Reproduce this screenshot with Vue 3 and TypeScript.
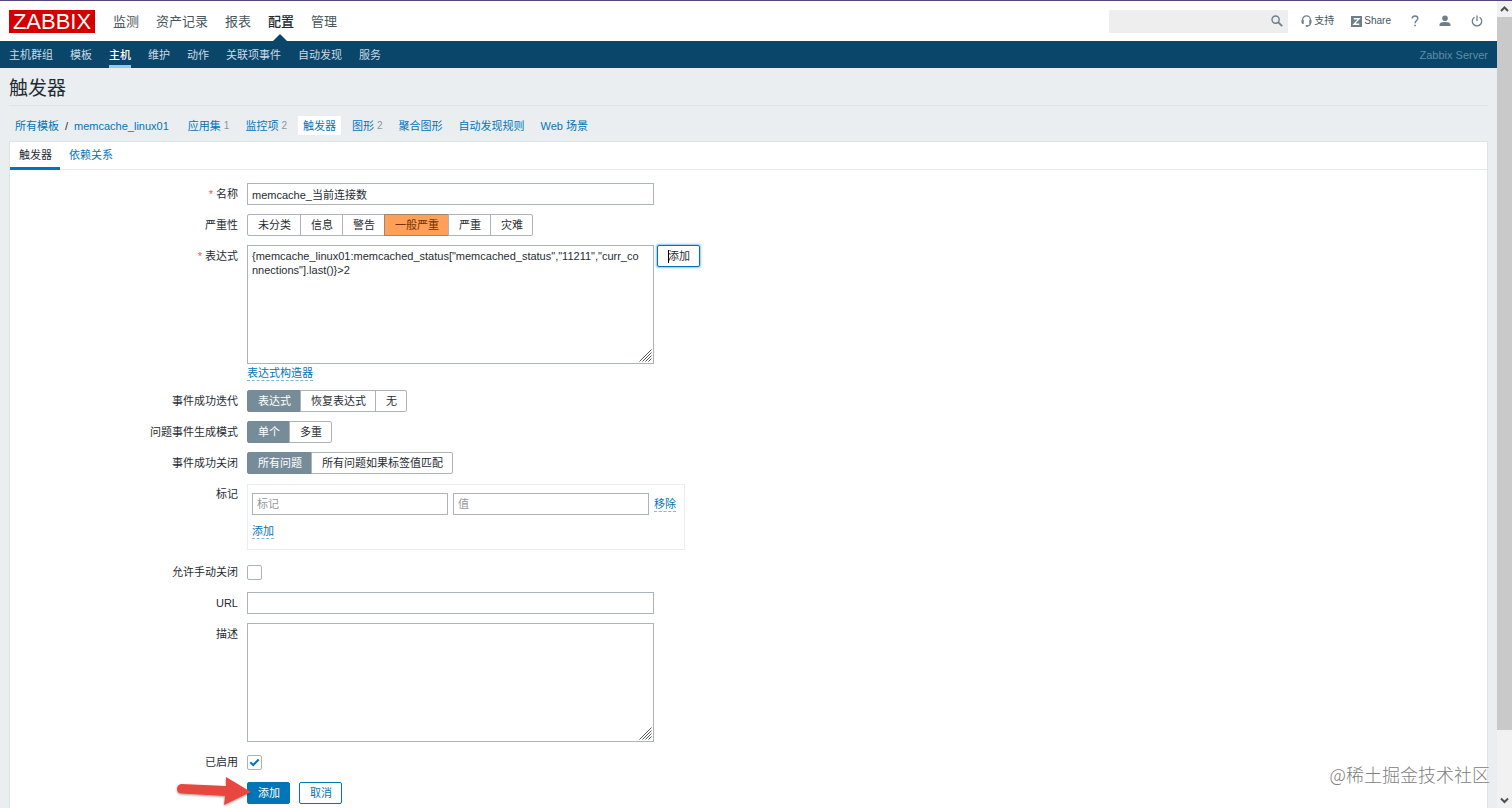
<script setup lang="ts">
import { ref } from 'vue'

interface CrumbLink {
  label: string
  count?: number
  active?: boolean
}

const mainMenu: string[] = ['监测', '资产记录', '报表', '配置', '管理']
const subMenu: string[] = ['主机群组', '模板', '主机', '维护', '动作', '关联项事件', '自动发现', '服务']
const crumbs: CrumbLink[] = [
  { label: '应用集', count: 1 },
  { label: '监控项', count: 2 },
  { label: '触发器', active: true },
  { label: '图形', count: 2 },
  { label: '聚合图形' },
  { label: '自动发现规则' },
  { label: 'Web 场景' },
]
const severities: string[] = ['未分类', '信息', '警告', '一般严重', '严重', '灾难']
const okModes: string[] = ['表达式', '恢复表达式', '无']
const problemModes: string[] = ['单个', '多重']
const closeModes: string[] = ['所有问题', '所有问题如果标签值匹配']

const name = ref('memcache_当前连接数')
const severity = ref('一般严重')
const expression = ref('{memcache_linux01:memcached_status["memcached_status","11211","curr_connections"].last()}>2')
const okMode = ref('表达式')
const problemMode = ref('单个')
const closeMode = ref('所有问题')
const tagName = ref('')
const tagValue = ref('')
const manualClose = ref(false)
const url = ref('')
const description = ref('')
const enabled = ref(true)
</script>

<template>
  <div class="window">
    <div class="page">
      <header class="top">
        <a class="logo" href="#">ZABBIX</a>
        <nav class="main-menu">
          <a v-for="m in mainMenu" :key="m" href="#" :class="{ on: m === '配置' }">{{ m }}</a>
        </nav>
        <div class="tools">
          <div class="search">
            <input type="text" aria-label="搜索" />
            <button type="button" aria-label="搜索">
              <svg width="12" height="12" viewBox="0 0 12 12">
                <circle cx="4.6" cy="4.6" r="3.6" fill="none" stroke="#6c7f8a" stroke-width="1.4" />
                <path d="M7.3 7.3L11.2 11.2" stroke="#6c7f8a" stroke-width="1.8" />
              </svg>
            </button>
          </div>
          <a class="tool support" href="#">
            <svg width="11" height="12" viewBox="0 0 11 12">
              <path d="M1.6 7V4.8a3.9 3.9 0 0 1 7.8 0V7M9.4 8c0 2-1.2 2.9-3.4 2.9" fill="none" stroke="#6c7f8a" stroke-width="1.2" />
              <path d="M.5 5h2.2v4H1.8Q.5 8.600.5 7.500zM10.500 5H8.300v4h.9q1.300-.4 1.300-1.500zM4.800 10h2v1.700h-2z" fill="#6c7f8a" />
            </svg>
            <span>支持</span>
          </a>
          <a class="tool share" href="#">
            <svg width="11" height="11" viewBox="0 0 11 11">
              <path d="M0 0h11v11H0z" fill="#6c7f8a" />
              <path d="M2.800 2.800h5.200L3 8.200h5.300" fill="none" stroke="#fff" stroke-width="1.400" />
            </svg>
            <span>Share</span>
          </a>
          <a class="tool icon" href="#" aria-label="帮助">
            <svg width="8" height="12" viewBox="0 0 8 12">
              <path d="M1.200 3.600C1.200 1.800 2.400 1 4 1s2.800.9 2.800 2.500C6.800 5.500 4.100 5.700 4.100 8.300" fill="none" stroke="#6c7f8a" stroke-width="1.400" />
              <path d="M3.300 9.700h1.600v1.600H3.300z" fill="#6c7f8a" />
            </svg>
          </a>
          <a class="tool icon" href="#" aria-label="用户">
            <svg width="12" height="12" viewBox="0 0 12 12">
              <circle cx="6" cy="3.200" r="2.800" fill="#6c7f8a" />
              <path d="M.5 11V9.700C.5 7.700 3 7 6 7s5.500.7 5.500 2.700V11z" fill="#6c7f8a" />
            </svg>
          </a>
          <a class="tool icon" href="#" aria-label="退出">
            <svg width="12" height="12" viewBox="0 0 12 12">
              <path d="M3.500 2.200a4.700 4.700 0 1 0 5 0M6 .5V6" fill="none" stroke="#6c7f8a" stroke-width="1.300" />
            </svg>
          </a>
        </div>
      </header>

      <nav class="sub-menu">
        <a v-for="s in subMenu" :key="s" href="#" :class="{ on: s === '主机' }">{{ s }}</a>
        <span class="server">Zabbix Server</span>
      </nav>

      <main>
        <h1>触发器</h1>
        <nav class="crumbs">
          <a href="#">所有模板</a>
          <span class="slash">/</span>
          <a href="#">memcache_linux01</a>
          <span v-for="c in crumbs" :key="c.label" class="crumb" :class="{ on: c.active }">
            <a href="#">{{ c.label }}</a>
            <span v-if="c.count" class="count">{{ c.count }}</span>
          </span>
        </nav>

        <section class="panel">
          <nav class="tabs">
            <a class="on" href="#">触发器</a>
            <a href="#">依赖关系</a>
          </nav>

          <form @submit.prevent>
            <label class="label required" for="name">名称</label>
            <div class="field"><input id="name" v-model="name" class="box wide" type="text" /></div>

            <span id="l-severity" class="label">严重性</span>
            <div class="field segments" role="radiogroup" aria-labelledby="l-severity">
              <label v-for="o in severities" :key="o" :class="{ warm: o === severity }">
                <input v-model="severity" type="radio" name="severity" :value="o" />{{ o }}
              </label>
            </div>

            <label class="label required" for="expression">表达式</label>
            <div class="field expression">
              <div class="area wide">
                <textarea id="expression" v-model="expression" class="box" spellcheck="false"></textarea>
                <svg class="grip" width="13" height="13" viewBox="0 0 13 13">
                  <path d="M.5 12.500l12-12M3.500 12.500l9-9M6.500 12.500l6-6M9.500 12.500l3-3" stroke="#555" stroke-width="1" />
                </svg>
              </div>
              <button type="button" class="btn focused">添加</button>
            </div>
            <div class="field builder"><a class="dashed" href="#">表达式构造器</a></div>

            <span id="l-ok" class="label">事件成功迭代</span>
            <div class="field segments" role="radiogroup" aria-labelledby="l-ok">
              <label v-for="o in okModes" :key="o" :class="{ sel: o === okMode }">
                <input v-model="okMode" type="radio" name="ok" :value="o" />{{ o }}
              </label>
            </div>

            <span id="l-problem" class="label">问题事件生成模式</span>
            <div class="field segments" role="radiogroup" aria-labelledby="l-problem">
              <label v-for="o in problemModes" :key="o" :class="{ sel: o === problemMode }">
                <input v-model="problemMode" type="radio" name="problem" :value="o" />{{ o }}
              </label>
            </div>

            <span id="l-close" class="label">事件成功关闭</span>
            <div class="field segments" role="radiogroup" aria-labelledby="l-close">
              <label v-for="o in closeModes" :key="o" :class="{ sel: o === closeMode }">
                <input v-model="closeMode" type="radio" name="close" :value="o" />{{ o }}
              </label>
            </div>

            <span class="label">标记</span>
            <div class="field tags">
              <div class="tag-row">
                <input v-model="tagName" class="box" type="text" placeholder="标记" aria-label="标记" />
                <input v-model="tagValue" class="box" type="text" placeholder="值" aria-label="值" />
                <a class="dashed" href="#">移除</a>
              </div>
              <a class="dashed" href="#">添加</a>
            </div>

            <label class="label" for="manual">允许手动关闭</label>
            <div class="field check"><input id="manual" v-model="manualClose" type="checkbox" /></div>

            <label class="label" for="url">URL</label>
            <div class="field"><input id="url" v-model="url" class="box wide" type="text" /></div>

            <label class="label" for="description">描述</label>
            <div class="field">
              <div class="area wide">
                <textarea id="description" v-model="description" class="box"></textarea>
                <svg class="grip" width="13" height="13" viewBox="0 0 13 13">
                  <path d="M.5 12.500l12-12M3.500 12.500l9-9M6.500 12.500l6-6M9.500 12.500l3-3" stroke="#555" stroke-width="1" />
                </svg>
              </div>
            </div>

            <label class="label" for="enabled">已启用</label>
            <div class="field check">
              <input id="enabled" v-model="enabled" type="checkbox" />
              <svg v-if="enabled" class="tick" width="11" height="9" viewBox="0 0 11 9">
                <path d="M1.300 4.200L4.300 7 9.700 1.500" fill="none" stroke="#0275b8" stroke-width="2" />
              </svg>
            </div>

            <div class="field actions">
              <button type="submit" class="btn primary">添加</button>
              <button type="button" class="btn">取消</button>
              <svg class="arrow" width="78" height="34" viewBox="0 0 78 34">
                <defs>
                  <filter id="arrow-shadow" x="-10%" y="-20%" width="120%" height="150%">
                    <feDropShadow dx="0" dy="1" stdDeviation="1" flood-color="#000" flood-opacity="0.4" />
                  </filter>
                </defs>
                <path d="M6 8L51 10V1L76 16 49 29 50 20 6 17.500Q2 17 2 13T6 8z" fill="#e8473f" filter="url(#arrow-shadow)" />
              </svg>
            </div>
          </form>
        </section>
      </main>
    </div>

    <div class="scrollbar" aria-hidden="true">
      <svg width="15" height="16" viewBox="0 0 15 16"><path d="M4 10l3.500-3.500L11 10" fill="none" stroke="#505050" stroke-width="2" /></svg>
      <div class="track"><div class="thumb"></div></div>
      <svg width="15" height="16" viewBox="0 0 15 16"><path d="M4 6.500L7.500 10 11 6.500" fill="none" stroke="#505050" stroke-width="2" /></svg>
    </div>
    <div class="watermark">@稀土掘金技术社区</div>
  </div>
</template>

<style>
body {
  margin: 0;
  overflow: hidden;
}
</style>

<style scoped>
* {
  box-sizing: border-box;
}
.window {
  position: relative;
  display: flex;
  height: 100vh;
  overflow: hidden;
  border-top: 1px solid #56467c;
  background: #ebeef0;
  color: #1f2c33;
  font: 11px/14px "Liberation Sans", "Noto Sans CJK SC", sans-serif;
}
input,
textarea,
button {
  margin: 0;
  font: inherit;
  color: inherit;
}
a {
  color: #0275b8;
  text-decoration: none;
}
.page {
  flex: 1;
  min-width: 0;
  display: flex;
  flex-direction: column;
}
.top {
  display: flex;
  align-items: center;
  height: 40px;
  padding: 0 14px 0 9px;
  background: #fff;
  flex: none;
}
.logo {
  width: 86px;
  height: 23px;
  background: #d40000;
  color: #fff;
  font-size: 22px;
  line-height: 24px;
  text-align: center;
}
.main-menu {
  display: flex;
  align-self: stretch;
  gap: 17px;
  margin-left: 18px;
  font-size: 13px;
  line-height: 42px;
}
.main-menu a {
  position: relative;
  height: 40px;
  color: #48565e;
}
.main-menu .on {
  color: #1f2c33;
  font-weight: 500;
}
.main-menu .on::after {
  content: "";
  position: absolute;
  bottom: 0;
  left: 50%;
  margin-left: -8px;
  border: 7px solid transparent;
  border-top: 0;
  border-bottom-color: #0a466a;
}
.tools {
  display: flex;
  align-items: center;
  margin-left: auto;
  font-size: 10px;
}
.search {
  display: flex;
  width: 179px;
  height: 23px;
  background: #eee;
  margin-right: 13px;
}
.search input {
  flex: 1;
  min-width: 0;
  border: 0;
  background: none;
}
.search button {
  display: flex;
  align-items: center;
  padding: 0 5px;
  border: 0;
  background: none;
}
.tool {
  display: flex;
  align-items: center;
  gap: 2px;
  color: #48565e;
}
.share {
  margin-left: 17px;
}
.icon {
  margin-left: 20px;
}
.sub-menu {
  display: flex;
  gap: 17px;
  flex: none;
  height: 27px;
  padding: 0 9px;
  background: #0a466a;
  line-height: 28px;
}
.sub-menu a {
  height: 27px;
  color: #c9dbe7;
}
.sub-menu .on {
  color: #fff;
  font-weight: 500;
  border-bottom: 3px solid #8fcaf5;
}
.server {
  margin-left: auto;
  color: #5d8dab;
}
main {
  flex: 1;
  display: flex;
  flex-direction: column;
  min-height: 0;
  padding: 0 9px;
}
h1 {
  margin: 0;
  height: 38px;
  flex: none;
  border-bottom: 1px solid #dfe4e7;
  font-size: 19px;
  line-height: 42px;
  font-weight: 400;
}
.crumbs {
  display: flex;
  align-items: center;
  flex: none;
  height: 35px;
  padding: 4px 6px 0;
}
.slash {
  margin: 0 6px;
}
.crumb {
  display: flex;
  gap: 3px;
  margin-left: 6px;
  padding: 3px 5px 2px;
}
.crumbs > a + .crumb {
  margin-left: 14px;
}
.crumb.on {
  background: #fff;
}
.count {
  color: #8a979e;
  font-size: 10px;
}
.panel {
  flex: 1;
  min-height: 0;
  border: 1px solid #dfe4e7;
  border-bottom: 0;
  background: #fff;
}
.tabs {
  display: flex;
  height: 28px;
  border-bottom: 1px solid #e7eaec;
  line-height: 27px;
}
.tabs a {
  height: 28px;
  padding: 0 8px 0 9px;
}
.tabs .on {
  color: #1f2c33;
  border-bottom: 3px solid #0275b8;
}
form {
  display: grid;
  grid-template-columns: 228px 1fr;
  column-gap: 9px;
  row-gap: 9px;
  padding-top: 13px;
}
.label {
  text-align: right;
  line-height: 22px;
}
.required::before {
  content: "* ";
  color: #e45959;
}
.field {
  grid-column: 2;
  min-height: 22px;
}
.wide {
  width: 407px;
}
.box {
  display: block;
  height: 22px;
  padding: 0 4px;
  border: 1px solid #acb4ba;
  background: #fff;
  border-radius: 0;
  outline: 0;
}
.box::placeholder {
  color: #999;
  opacity: 1;
}
.area {
  position: relative;
}
textarea.box {
  width: 100%;
  height: 119px;
  padding: 3px 14px 3px 4px;
  line-height: 14px;
  resize: none;
  word-break: break-all;
  overflow: hidden;
}
.grip {
  position: absolute;
  right: 2px;
  bottom: 2px;
}
.expression {
  display: flex;
  gap: 3px;
}
.builder {
  min-height: 17px;
  height: 17px;
  margin-top: -9px;
  line-height: 18px;
}
.dashed {
  display: inline-block;
  border-bottom: 1px dashed #7fb8da;
  line-height: 14px;
}
.segments {
  display: flex;
}
.segments label {
  position: relative;
  height: 22px;
  padding: 0 9px 0 10px;
  border: 1px solid #acb4ba;
  line-height: 20px;
}
.segments label + label {
  margin-left: -1px;
}
.segments label:first-child {
  border-radius: 2px 0 0 2px;
}
.segments label:last-child {
  border-radius: 0 2px 2px 0;
}
.segments input {
  position: absolute;
  inset: 0;
  opacity: 0;
}
.segments .sel {
  background: #768d99;
  border-color: #768d99;
  color: #fff;
}
.segments .warm {
  background: #ffa059;
  border-color: #a58468;
  color: #733100;
}
.btn {
  height: 22px;
  padding: 0 9px 0 10px;
  border: 1px solid #0275b8;
  border-radius: 2px;
  background: #fff;
  color: #0275b8;
  line-height: 20px;
}
.primary {
  background: #0275b8;
  color: #fff;
}
.focused {
  position: relative;
  color: #1f2c33;
  box-shadow: 0 0 2px 1px #8fc4ea;
}
.focused::before {
  content: "";
  position: absolute;
  left: 10px;
  top: 4px;
  width: 1px;
  height: 13px;
  background: #000;
}
.tags {
  justify-self: start;
  height: 66px;
  margin: 1px 0 2px;
  padding: 8px 8px 0 4px;
  border: 1px solid #ebeef0;
}
.tag-row {
  display: flex;
  align-items: center;
  gap: 5px;
  margin-bottom: 9px;
}
.tag-row .box {
  width: 196px;
}
.check {
  display: flex;
  align-items: center;
  position: relative;
}
.check input {
  appearance: none;
  width: 15px;
  height: 15px;
  border: 1px solid #acb4ba;
  border-radius: 2px;
  background: #fff;
}
.tick {
  position: absolute;
  left: 2px;
  pointer-events: none;
}
.actions {
  position: relative;
  display: flex;
  gap: 9px;
}
.arrow {
  position: absolute;
  left: -72px;
  top: -6px;
}
.scrollbar {
  display: flex;
  flex-direction: column;
  flex: none;
  width: 15px;
  background: #f1f1f1;
}
.track {
  flex: 1;
}
.thumb {
  height: 92%;
  background: #c9c9c9;
}
.watermark {
  position: absolute;
  right: 22px;
  bottom: 22px;
  color: #808080;
  font: 300 18px/24px "Noto Sans CJK SC", sans-serif;
  text-shadow: 0 0 2px #fff;
}
</style>
